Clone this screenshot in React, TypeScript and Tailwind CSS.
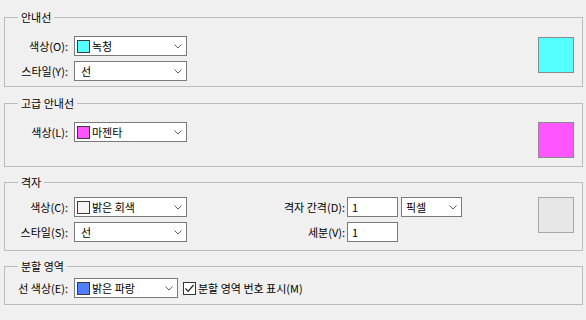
import React from "react"

function Chevron() {
  return (
    <svg width="8" height="5" viewBox="0 0 8 5" className="shrink-0">
      <path d="M0.5 0.5 L4 4 L7.5 0.5" fill="none" stroke="#606060" strokeWidth="1" />
    </svg>
  )
}

interface SelectProps {
  text: string
  swatch?: string
  width: string
  pad?: string
}

function Select({ text, swatch, width, pad = "pl-[6px]" }: SelectProps) {
  return (
    <div
      className={`flex h-[20px] items-center border border-[#7a7a7a] bg-white pr-[4px] ${width} ${swatch ? "pl-[2px]" : pad}`}
    >
      {swatch && (
        <span
          className="mr-[2px] h-[13px] w-[13px] shrink-0 border border-[#3a3a3a]"
          style={{ backgroundColor: swatch }}
        />
      )}
      <span className="flex-1 truncate leading-[18px]">{text}</span>
      <Chevron />
    </div>
  )
}

function Label({ children, w = "w-[63px]" }: { children: React.ReactNode; w?: string }) {
  return <span className={`${w} shrink-0 text-right leading-[20px]`}>{children}</span>
}

function Input({ value }: { value: string }) {
  return (
    <div className="flex h-[20px] w-[51px] items-center border border-[#7a7a7a] bg-white pl-[4px] leading-[18px]">
      {value}
    </div>
  )
}

function Swatch({ color, border = "border-[#8a8a8a]" }: { color: string; border?: string }) {
  return (
    <span
      className={`mr-[8px] ml-auto h-[36px] w-[36px] shrink-0 border ${border}`}
      style={{ backgroundColor: color }}
    />
  )
}

function Group({
  title,
  className,
  children,
}: {
  title: string
  className: string
  children: React.ReactNode
}) {
  return (
    <fieldset className={`w-[579px] border border-[#bcbcbc] ${className}`}>
      <legend className="ml-[13px] px-[3px] leading-[14px]">{title}</legend>
      {children}
    </fieldset>
  )
}

export default function App() {
  return (
    <div className="h-[320px] w-[586px] bg-[#f0f0f0] px-[4px] pt-[10px] font-['Noto_Sans_CJK_KR',sans-serif] text-[11px] text-black">
      <Group title="안내선" className="pt-[12px] pb-[5px]">
        <div className="flex items-start">
          <div className="flex flex-col gap-[5px]">
            <div className="flex items-center gap-[6px]">
              <Label>색상(O):</Label>
              <Select text="녹청" swatch="#55ffff" width="w-[113px]" />
            </div>
            <div className="flex items-center gap-[6px]">
              <Label>스타일(Y):</Label>
              <Select text="선" width="w-[113px]" />
            </div>
          </div>
          <div className="ml-auto mt-[1px] flex">
            <Swatch color="#55ffff" />
          </div>
        </div>
      </Group>

      <Group title="고급 안내선" className="mt-[9px] pt-[12px] pb-[8px]">
        <div className="flex items-start">
          <div className="flex items-center gap-[6px]">
            <Label>색상(L):</Label>
            <Select text="마젠타" swatch="#ff55ff" width="w-[113px]" />
          </div>
          <div className="ml-auto flex">
            <Swatch color="#ff55ff" />
          </div>
        </div>
      </Group>

      <Group title="격자" className="mt-[8px] pt-[8px] pb-[8px]">
        <div className="flex items-start">
          <div className="flex flex-col gap-[5px]">
            <div className="flex items-center gap-[6px]">
              <Label>색상(C):</Label>
              <Select text="밝은 회색" swatch="#f4f4f4" width="w-[113px]" />
            </div>
            <div className="flex items-center gap-[6px]">
              <Label>스타일(S):</Label>
              <Select text="선" width="w-[113px]" />
            </div>
          </div>
          <div className="ml-[76px] flex flex-col gap-[5px]">
            <div className="flex items-center">
              <Label w="w-[82px]">격자 간격(D):</Label>
              <span className="ml-[2px]">
                <Input value="1" />
              </span>
              <span className="ml-[3px]">
                <Select text="픽셀" width="w-[61px]" pad="pl-[4px]" />
              </span>
            </div>
            <div className="flex items-center">
              <Label w="w-[82px]">세분(V):</Label>
              <span className="ml-[2px]">
                <Input value="1" />
              </span>
            </div>
          </div>
          <div className="ml-auto flex">
            <Swatch color="#e6e6e6" border="border-[#a8a8a8]" />
          </div>
        </div>
      </Group>

      <Group title="분할 영역" className="mt-[8px] pt-[5px] pb-[6px]">
        <div className="flex items-center">
          <div className="flex items-center gap-[6px]">
            <Label>선 색상(E):</Label>
            <Select text="밝은 파랑" swatch="#4f7fff" width="w-[104px]" />
          </div>
          <span className="ml-[5px] flex h-[13px] w-[13px] items-center justify-center border border-[#333] bg-white">
            <svg width="11" height="11" viewBox="0 0 11 11">
              <path d="M1.5 5.5 L4.2 8.3 L9.5 2" fill="none" stroke="#222" strokeWidth="1.2" />
            </svg>
          </span>
          <span className="ml-[2px] leading-[20px]">분할 영역 번호 표시(M)</span>
        </div>
      </Group>
    </div>
  )
}
